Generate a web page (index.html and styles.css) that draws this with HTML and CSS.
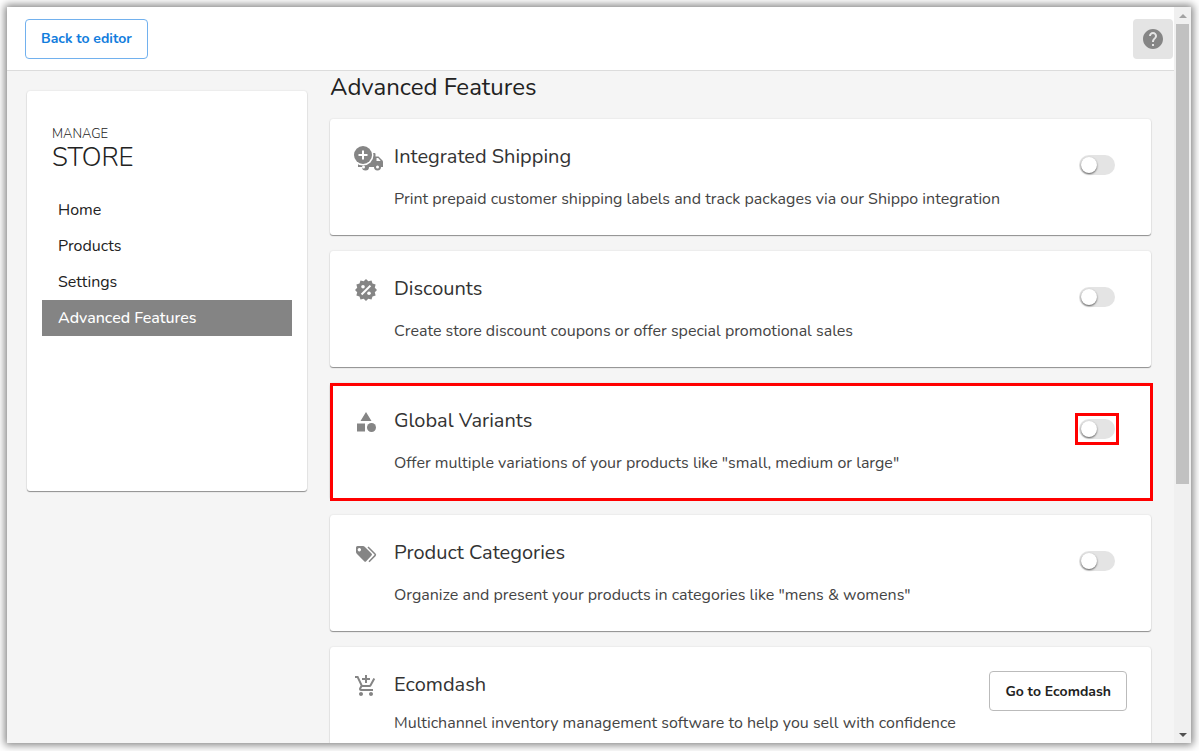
FILE: index.html
```html
<!DOCTYPE html>
<html lang="en">
<head>
    <meta charset="UTF-8">
    <meta name="viewport" content="width=device-width, initial-scale=1.0">
    <title>Advanced Features</title>
    <link rel="stylesheet" href="styles.css">
</head>
<body>
    <div class="window">
        <div class="page">
            <header class="topbar">
                <button type="button" class="btn btn-primary">Back to editor</button>
                <button type="button" class="help-btn" aria-label="Help">
                    <svg viewBox="0 0 24 24" width="24" height="24"><path d="M12 2C6.480 2 2 6.480 2 12s4.480 10 10 10 10-4.480 10-10S17.520 2 12 2zm1 17h-2v-2h2v2zm2.070-7.750l-.9.920C13.450 12.900 13 13.500 13 15h-2v-.5c0-1.100.450-2.100 1.170-2.830l1.240-1.260c.370-.360.590-.860.590-1.410 0-1.100-.9-2-2-2s-2 .9-2 2H8c0-2.210 1.790-4 4-4s4 1.790 4 4c0 .880-.360 1.680-.930 2.250z"/></svg>
                </button>
            </header>

            <div class="content">
                <aside class="sidebar">
                    <h2><small>MANAGE</small>STORE</h2>
                    <nav>
                        <a href="#home">Home</a>
                        <a href="#products">Products</a>
                        <a href="#settings">Settings</a>
                        <a href="#advanced" class="active">Advanced Features</a>
                    </nav>
                </aside>

                <main class="features">
                    <h1>Advanced Features</h1>

                    <section class="card">
                        <svg class="icon icon-wide" viewBox="1 1 30 26">
                            <path d="M8 17h2a10 10 0 0 0 9-9h2.500q1 0 1 1v2.500h3l4 4q.5.5.5 1.500v5h-2a3.500 3.500 0 0 1-7 0h-5a3.500 3.500 0 0 1-7 0H5v-5z"/>
                            <circle cx="10" cy="10" r="10.500" class="hole"/>
                            <circle cx="10" cy="10" r="9"/>
                            <path class="hole" d="M9 5.500h2V9h3.500v2H11v3.500H9V11H5.500V9H9z"/>
                            <path class="hole" d="M23.500 13h1.700l2.500 3h-4.200z"/>
                            <circle cx="10.500" cy="22" r="1.500" class="hole"/>
                            <circle cx="24.500" cy="22" r="1.500" class="hole"/>
                        </svg>
                        <div class="card-text">
                            <h3 id="shipping">Integrated Shipping</h3>
                            <p>Print prepaid customer shipping labels and track packages via our Shippo integration</p>
                        </div>
                        <input type="checkbox" class="toggle" aria-labelledby="shipping">
                    </section>

                    <section class="card">
                        <svg class="icon" viewBox="0 0 24 24">
                            <path d="M12 1l2.300 2.200 3.200-.8 1 3.100 3.100 1-.8 3.200L23 12l-2.200 2.300.8 3.200-3.100 1-1 3.100-3.200-.8L12 23l-2.300-2.200-3.200.8-1-3.100-3.100-1 .8-3.200L1 12l2.200-2.300-.8-3.200 3.100-1 1-3.100 3.200.8z"/>
                            <path class="hole" d="M15.700 6.900l1.500 1.400-8.900 8.900-1.500-1.400z"/>
                            <circle cx="9" cy="8.800" r="1.800" class="hole"/>
                            <circle cx="15" cy="15.200" r="1.800" class="hole"/>
                        </svg>
                        <div class="card-text">
                            <h3 id="discounts">Discounts</h3>
                            <p>Create store discount coupons or offer special promotional sales</p>
                        </div>
                        <input type="checkbox" class="toggle" aria-labelledby="discounts">
                    </section>

                    <section class="card highlight">
                        <svg class="icon" viewBox="0 0 24 24">
                            <path d="M12 2l5.500 9h-11zM3 13.500h8v8H3z"/>
                            <circle cx="17.500" cy="17.500" r="4.500"/>
                        </svg>
                        <div class="card-text">
                            <h3 id="variants">Global Variants</h3>
                            <p>Offer multiple variations of your products like "small, medium or large"</p>
                        </div>
                        <div class="toggle-highlight">
                            <input type="checkbox" class="toggle" aria-labelledby="variants">
                        </div>
                    </section>

                    <section class="card">
                        <svg class="icon" viewBox="0 0 24 24">
                            <path fill-rule="evenodd" d="M3.500 4H9q1 0 1.700.7l6.800 6.800q1 1 0 2l-5.300 5.700q-1 1-2 0L3 12q-1-1-1-2V5.500Q2 4 3.500 4zM5.300 6a1.700 1.700 0 1 0 .1 0z"/>
                            <path class="line" d="M14 5l7 7q.8.8 0 1.600l-6 6.200"/>
                        </svg>
                        <div class="card-text">
                            <h3 id="categories">Product Categories</h3>
                            <p>Organize and present your products in categories like "mens &amp; womens"</p>
                        </div>
                        <input type="checkbox" class="toggle" aria-labelledby="categories">
                    </section>

                    <section class="card card-compact">
                        <svg class="icon" viewBox="0 0 24 24"><path d="M11 9h2V6h3V4h-3V1h-2v3H8v2h3v3zm-4 9c-1.100 0-1.990.9-1.990 2S5.900 22 7 22s2-.9 2-2-.9-2-2-2zm10 0c-1.100 0-1.990.9-1.990 2s.890 2 1.990 2 2-.9 2-2-.9-2-2-2zm-9.830-3.250l.030-.120.9-1.630h7.450c.750 0 1.410-.410 1.750-1.030l3.860-7.010L19.420 4h-.010l-1.100 2-2.760 5H8.530l-.130-.270L6.160 6l-.950-2-.940-2H1v2h2l3.600 7.590-1.350 2.450c-.160.280-.250.610-.250.960 0 1.100.9 2 2 2h12v-2H7.420c-.130 0-.250-.110-.250-.250z"/></svg>
                        <div class="card-text">
                            <h3>Ecomdash</h3>
                            <p>Multichannel inventory management software to help you sell with confidence</p>
                        </div>
                        <button type="button" class="btn">Go to Ecomdash</button>
                    </section>
                </main>
            </div>
        </div>

        <div class="scrollbar" aria-hidden="true">
            <span class="arrow arrow-up"></span>
            <span class="track"><span class="thumb"></span></span>
            <span class="arrow arrow-down"></span>
        </div>
    </div>
</body>
</html>
```
FILE: styles.css
```css
* {
    margin: 0;
    padding: 0;
    box-sizing: border-box;
}

body {
    height: 100vh;
    padding: 7px 8px 8px 7px;
    overflow: hidden;
    background: #fff;
    color: #222;
    font-family: 'Nunito', 'Open Sans', sans-serif;
    font-size: 16px;
    line-height: 24px;
}

.window {
    display: flex;
    height: 100%;
    box-shadow: 0 0 8px 2px rgba(0, 0, 0, 0.5);
}

.page {
    flex: 1;
    min-width: 0;
    overflow: hidden;
    background: #f5f5f5;
}

.topbar {
    display: flex;
    align-items: center;
    justify-content: space-between;
    height: 64px;
    padding: 0 1px 0 18px;
    background: #fff;
    border-bottom: 1px solid #dcdcdc;
}

.btn {
    height: 40px;
    padding: 0 15px;
    background: #fff;
    border: 1px solid #bbb;
    border-radius: 4px;
    color: #222;
    font-family: inherit;
    font-size: 14px;
    font-weight: 700;
    white-space: nowrap;
    cursor: pointer;
}

.btn-primary {
    border-color: #72b1ee;
    color: #127ddd;
}

.help-btn {
    display: flex;
    align-items: center;
    justify-content: center;
    width: 40px;
    height: 40px;
    background: #e4e4e4;
    border: none;
    border-radius: 4px;
    cursor: pointer;
}

.help-btn svg {
    fill: #858585;
}

.content {
    display: flex;
    align-items: flex-start;
    gap: 23px;
    padding: 0 23px 0 20px;
}

.sidebar,
.card {
    background: #fff;
    border-radius: 3px;
    box-shadow: 0 1px 1px rgba(0, 0, 0, 0.4), 0 0 2px rgba(0, 0, 0, 0.12);
}

.sidebar {
    flex: 0 0 280px;
    min-height: 400px;
    margin-top: 20px;
    padding: 32px 15px;
}

.sidebar h2 {
    margin: 0 10px 21px;
    font-size: 26px;
    font-weight: 300;
    line-height: 26px;
}

.sidebar small {
    display: block;
    font-size: 13px;
    line-height: 22px;
}

.sidebar nav a {
    display: block;
    padding: 6px 16px;
    color: #222;
    text-decoration: none;
}

.sidebar nav a.active {
    background: #848484;
    color: #fff;
    font-weight: 500;
}

.features {
    flex: 1;
    min-width: 0;
    display: flex;
    flex-direction: column;
    gap: 16px;
}

.features h1 {
    font-size: 24px;
    font-weight: 400;
    line-height: 32px;
}

.card {
    position: relative;
    display: flex;
    align-items: flex-start;
    gap: 16px;
    min-height: 116px;
    padding: 24px;
}

.icon {
    flex: none;
    width: 24px;
    height: 24px;
    margin-top: 3px;
    fill: #858585;
    overflow: visible;
}

.icon-wide {
    width: 30px;
    height: 26px;
    margin-right: -6px;
}

.icon .hole {
    fill: #fff;
}

.icon .line {
    fill: none;
    stroke: #858585;
    stroke-width: 1.5;
}

.card-text {
    flex: 1;
    min-width: 0;
}

.card h3 {
    margin-bottom: 16px;
    color: #333;
    font-size: 20px;
    font-weight: 400;
    line-height: 28px;
}

.card-compact h3 {
    margin-bottom: 12px;
}

.card p {
    color: #444;
    white-space: nowrap;
}

.toggle {
    position: relative;
    flex: none;
    appearance: none;
    width: 36px;
    height: 20px;
    margin: 12px 12px 0 0;
    background: #e4e4e4;
    border-radius: 10px;
    cursor: pointer;
}

.toggle::before {
    content: "";
    position: absolute;
    top: 2px;
    left: 2px;
    width: 16px;
    height: 16px;
    background: #fff;
    border-radius: 50%;
    box-shadow: 0 1px 2px rgba(0, 0, 0, 0.6);
}

.toggle:checked {
    background: #127ddd;
}

.toggle:checked::before {
    left: 18px;
}

/* red callout around the card and its toggle */
.highlight::after {
    content: "";
    position: absolute;
    inset: 0 -2px -2px 0;
    border: 3px solid #f00;
    pointer-events: none;
}

.toggle-highlight {
    display: flex;
    margin: 6px 8px 0 0;
    padding: 3px 1px;
    border: 3px solid #f00;
}

.toggle-highlight .toggle {
    margin: 0;
}

.scrollbar {
    flex: 0 0 17px;
    display: flex;
    flex-direction: column;
    background: #f0f0f0;
}

.track {
    flex: 1;
    padding: 0 2px;
}

.thumb {
    display: block;
    width: 100%;
    height: 65.5%;
    background: #c1c1c1;
}

.arrow {
    display: flex;
    align-items: center;
    justify-content: center;
    height: 17px;
}

.arrow::before {
    content: "";
    border: 4px solid transparent;
}

.arrow-up::before {
    border-top: none;
    border-bottom-color: #a3a3a3;
}

.arrow-down::before {
    border-bottom: none;
    border-top-color: #505050;
}
```
